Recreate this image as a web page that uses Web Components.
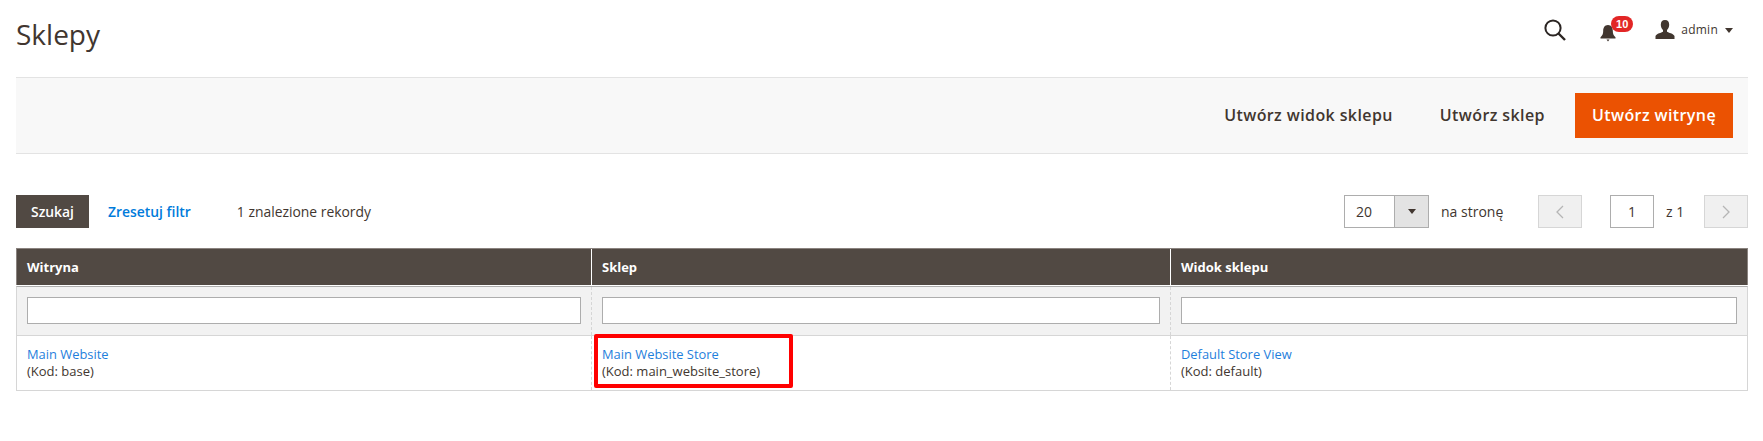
<!DOCTYPE html>
<html lang="pl">
  <head>
    <meta charset="UTF-8" />
    <title>Sklepy</title>
    <style>
      body {
        margin: 0;
        padding: 0 15px 0 16px;
        background: #fff;
        color: #41362f;
        font: 14px/20px 'Open Sans', sans-serif;
      }
    </style>
  </head>
  <body>
    <template id="page-header">
      <style>
        :host { display: flex; align-items: center; justify-content: space-between; height: 77px; }
        h1 { margin: 0 0 9px; font-size: 28px; line-height: 36px; font-weight: 400; color: #41362f; }
        .tools { display: flex; align-items: center; height: 60px; margin-bottom: 17px; padding-right: 15px; }
        svg { display: block; }
        .bell { position: relative; margin-left: 33px; width: 20px; height: 24px; }
        .badge {
          position: absolute; left: 11px; top: -2px; width: 22px; height: 16px; border-radius: 8px;
          background: #e22626; color: #fff; font: 700 11px/16px 'Liberation Sans', sans-serif; text-align: center;
        }
        .user { margin-left: 35px; }
        .name { margin-left: 6px; font-size: 12px; letter-spacing: .25px; color: #41362f; }
        .caret { margin-left: 7px; width: 0; height: 0; border: 4px solid transparent; border-top: 5px solid #41362f; border-bottom: 0; }
      </style>
      <h1>Sklepy</h1>
      <div class="tools">
        <svg width="24" height="24" viewBox="0 0 24 24" fill="none" stroke="#2b2523">
          <circle cx="10" cy="10" r="7.6" stroke-width="2"/>
          <path d="M15.5 15.5 22 22" stroke-width="2.4"/>
        </svg>
        <div class="bell">
          <svg width="16" height="20" viewBox="0 0 16 20" style="margin-top:6px" fill="#41362f">
            <path d="M8 1c3.4 0 4.8 2.8 4.8 6 0 3 1 4.700 2.700 6.200V14.500H.5V13.200C2.200 11.700 3.200 10 3.200 7 3.200 3.800 4.600 1 8 1Z"/>
            <path d="M6.500 15.500h3L8 17.500Z"/>
          </svg>
          <span class="badge">10</span>
        </div>
        <svg class="user" width="20" height="20" viewBox="0 0 20 20" fill="#41362f">
          <path d="M10 0c2.900 0 4.200 2 4.200 4.700 0 2.200-.9 4.300-2.200 5.300v1.700c1.500 1 6.500 1.800 7.500 4.300V19H.5v-3c1-2.500 6-3.300 7.500-4.300V10C6.700 9 5.800 6.900 5.800 4.700 5.800 2 7.100 0 10 0Z"/>
        </svg>
        <span class="name">admin</span>
        <span class="caret"></span>
      </div>
    </template>

    <template id="action-bar">
      <style>
        :host {
          display: flex; justify-content: flex-end; align-items: center; gap: 13px;
          height: 75px; padding-right: 15px; background: #f8f8f8;
          border-top: 1px solid #e3e3e3; border-bottom: 1px solid #e3e3e3;
        }
      </style>
      <slot></slot>
    </template>

    <template id="action-button">
      <style>
        :host {
          display: block; padding: 0 17px; height: 45px;
          font: 600 16px/45px 'Open Sans', sans-serif; letter-spacing: .4px; color: #41362f;
        }
        :host([primary]) { background: #eb5202; color: #fff; }
      </style>
      <slot></slot>
    </template>

    <template id="grid-toolbar">
      <style>
        :host { display: flex; align-items: center; height: 33px; margin-top: 41px; margin-bottom: 20px; font-size: 14px; }
        .search { width: 73px; height: 33px; background: #514943; color: #fff; font-weight: 600; font-size: 13.900px; line-height: 33px; text-align: center; }
        .reset { margin-left: 19px; color: #007bdb; font-weight: 600; font-size: 13.900px; }
        .count { margin-left: 46px; color: #41362f; font-size: 13.900px; }
        .right { margin-left: auto; display: flex; align-items: center; }
        .select { display: flex; width: 85px; height: 33px; box-sizing: border-box; border: 1px solid #adadad; }
        .select b { flex: 1; padding-left: 11px; font-weight: 400; line-height: 31px; }
        .select i { width: 33px; background: #e3e3e3; border-left: 1px solid #adadad; display: flex; align-items: center; justify-content: center; }
        .select i::before { content: ''; border: 4px solid transparent; border-top: 5px solid #41362f; border-bottom: 0; }
        .per { margin-left: 12px; width: 97px; }
        .nav { width: 44px; height: 33px; box-sizing: border-box; background: #f0f0f0; border: 1px solid #d6d6d6; display: flex; align-items: center; justify-content: center; }
        .page { margin-left: 28px; width: 44px; height: 33px; box-sizing: border-box; border: 1px solid #adadad; line-height: 31px; text-align: center; }
        .of { margin-left: 12px; width: 38px; }
      </style>
      <div class="search">Szukaj</div>
      <span class="reset">Zresetuj filtr</span>
      <span class="count">1 znalezione rekordy</span>
      <div class="right">
        <div class="select"><b>20</b><i></i></div>
        <span class="per">na stronę</span>
        <div class="nav">
          <svg width="8" height="14" viewBox="0 0 8 14" fill="none" stroke="#b5b5b5" stroke-width="1.300"><path d="M7 1 1 7l6 6"/></svg>
        </div>
        <div class="page">1</div>
        <span class="of">z 1</span>
        <div class="nav">
          <svg width="8" height="14" viewBox="0 0 8 14" fill="none" stroke="#b5b5b5" stroke-width="1.300"><path d="m1 1 6 6-6 6"/></svg>
        </div>
      </div>
    </template>

    <template id="store-grid">
      <style>
        :host { display: block; position: relative; }
        .row { display: grid; grid-template-columns: 574px 579px 1fr; }
        .head { height: 37px; box-sizing: border-box; background: #514943; border: 1px solid #8a837f; border-bottom: 0; }
        .head div { padding-left: 10px; color: #fff; font-weight: 700; font-size: 13px; line-height: 36px; border-left: 1px solid #fff; }
        .head div:first-child { border-left: 0; }
        .filter { height: 50px; box-sizing: border-box; margin-top: 1px; background: #f2f2f2; border: 1px solid #d6d6d6; border-top: 1px solid #adadad; }
        .filter div { padding: 10px 10px 0; border-left: 1px dashed #d6d6d6; }
        .filter div:first-child { border-left: 0; }
        .filter span { display: block; height: 27px; box-sizing: border-box; background: #fff; border: 1px solid #adadad; }
        .data { height: 55px; box-sizing: border-box; border: 1px solid #d6d6d6; border-top: 0; font-size: 13px; line-height: 17px; }
        .data div { padding: 10px 10px 0; border-left: 1px dashed #d6d6d6; color: #41362f; }
        .data div:first-child { border-left: 0; }
        a { display: block; color: #1f80dc; font-size: 12.900px; text-decoration: none; }
        .mark { position: absolute; left: 578px; bottom: 3px; width: 199px; height: 54px; box-sizing: border-box; border: 4px solid #f00; border-radius: 2px; }
      </style>
      <div class="row head"><div>Witryna</div><div>Sklep</div><div>Widok sklepu</div></div>
      <div class="row filter"><div><span></span></div><div><span></span></div><div><span></span></div></div>
      <div class="row data">
        <div><a>Main Website</a>(Kod: base)</div>
        <div><a>Main Website Store</a>(Kod: main_website_store)</div>
        <div><a>Default Store View</a>(Kod: default)</div>
      </div>
      <div class="mark"></div>
    </template>

    <page-header></page-header>
    <action-bar>
      <action-button>Utwórz widok sklepu</action-button>
      <action-button>Utwórz sklep</action-button>
      <action-button primary>Utwórz witrynę</action-button>
    </action-bar>
    <grid-toolbar></grid-toolbar>
    <store-grid></store-grid>

    <script>
      // every element just stamps its own template into an open shadow root
      for (const name of ['page-header', 'action-bar', 'action-button', 'grid-toolbar', 'store-grid']) {
        customElements.define(
          name,
          class extends HTMLElement {
            constructor() {
              super()
              let template = document.getElementById(name)
              this.attachShadow({ mode: 'open' }).appendChild(template.content.cloneNode(true))
            }
          }
        )
      }
    </script>
  </body>
</html>
